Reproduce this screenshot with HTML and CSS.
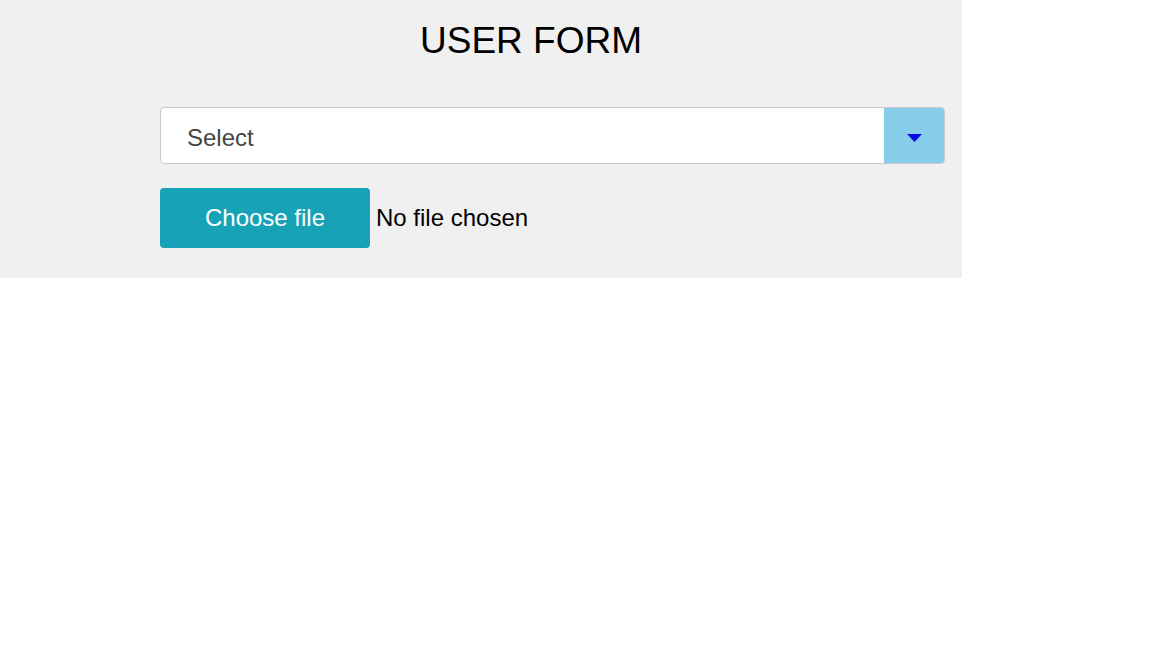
FILE: index.html
```html
<!DOCTYPE html>
<html lang="en">
<head>
<meta charset="utf-8">
<title>User Form</title>
<link rel="stylesheet" href="styles.css">
</head>
<body>
<div class="panel">
  <h1 class="title">USER FORM</h1>
  <form class="form">
    <div class="select">
      <span class="select-text">Select</span>
      <span class="select-arrow"><svg width="15" height="8" viewBox="0 0 15 8"><polygon points="0,0 15,0 7.5,8" fill="#0a0ae6"/></svg></span>
    </div>
    <div class="file-row">
      <label class="file-btn">Choose file</label>
      <span class="file-name">No file chosen</span>
    </div>
  </form>
</div>
</body>
</html>
```
FILE: styles.css
```css
* { box-sizing: border-box; }
body {
  margin: 0;
  background: #ffffff;
  font-family: "Liberation Sans", Arial, sans-serif;
}
.panel {
  width: 962px;
  height: 278px;
  background: #f0f0f0;
  padding-top: 21px;
}
.title {
  margin: 0 0 46px 100px;
  font-size: 37px;
  font-weight: normal;
  line-height: 40px;
  text-align: center;
  color: #000;
}
.form {
  padding: 0 17px 0 160px;
}
.select {
  display: flex;
  height: 57px;
  background: #fff;
  border: 1px solid #c8c8c8;
  border-radius: 4px;
  overflow: hidden;
}
.select-text {
  flex: 1;
  display: flex;
  align-items: center;
  padding-left: 26px;
  padding-top: 5px;
  font-size: 24px;
  color: #444;
}
.select-arrow {
  width: 60px;
  background: #87ceeb;
  display: flex;
  align-items: center;
  justify-content: center;
  padding-top: 4px;
}
.file-row {
  display: flex;
  align-items: center;
  margin-top: 24px;
  gap: 6px;
}
.file-btn {
  width: 210px;
  height: 60px;
  background: #17a2b8;
  color: #fff;
  border-radius: 4px;
  display: flex;
  align-items: center;
  justify-content: center;
  font-size: 24px;
}
.file-name {
  font-size: 24px;
  color: #000;
}
```
